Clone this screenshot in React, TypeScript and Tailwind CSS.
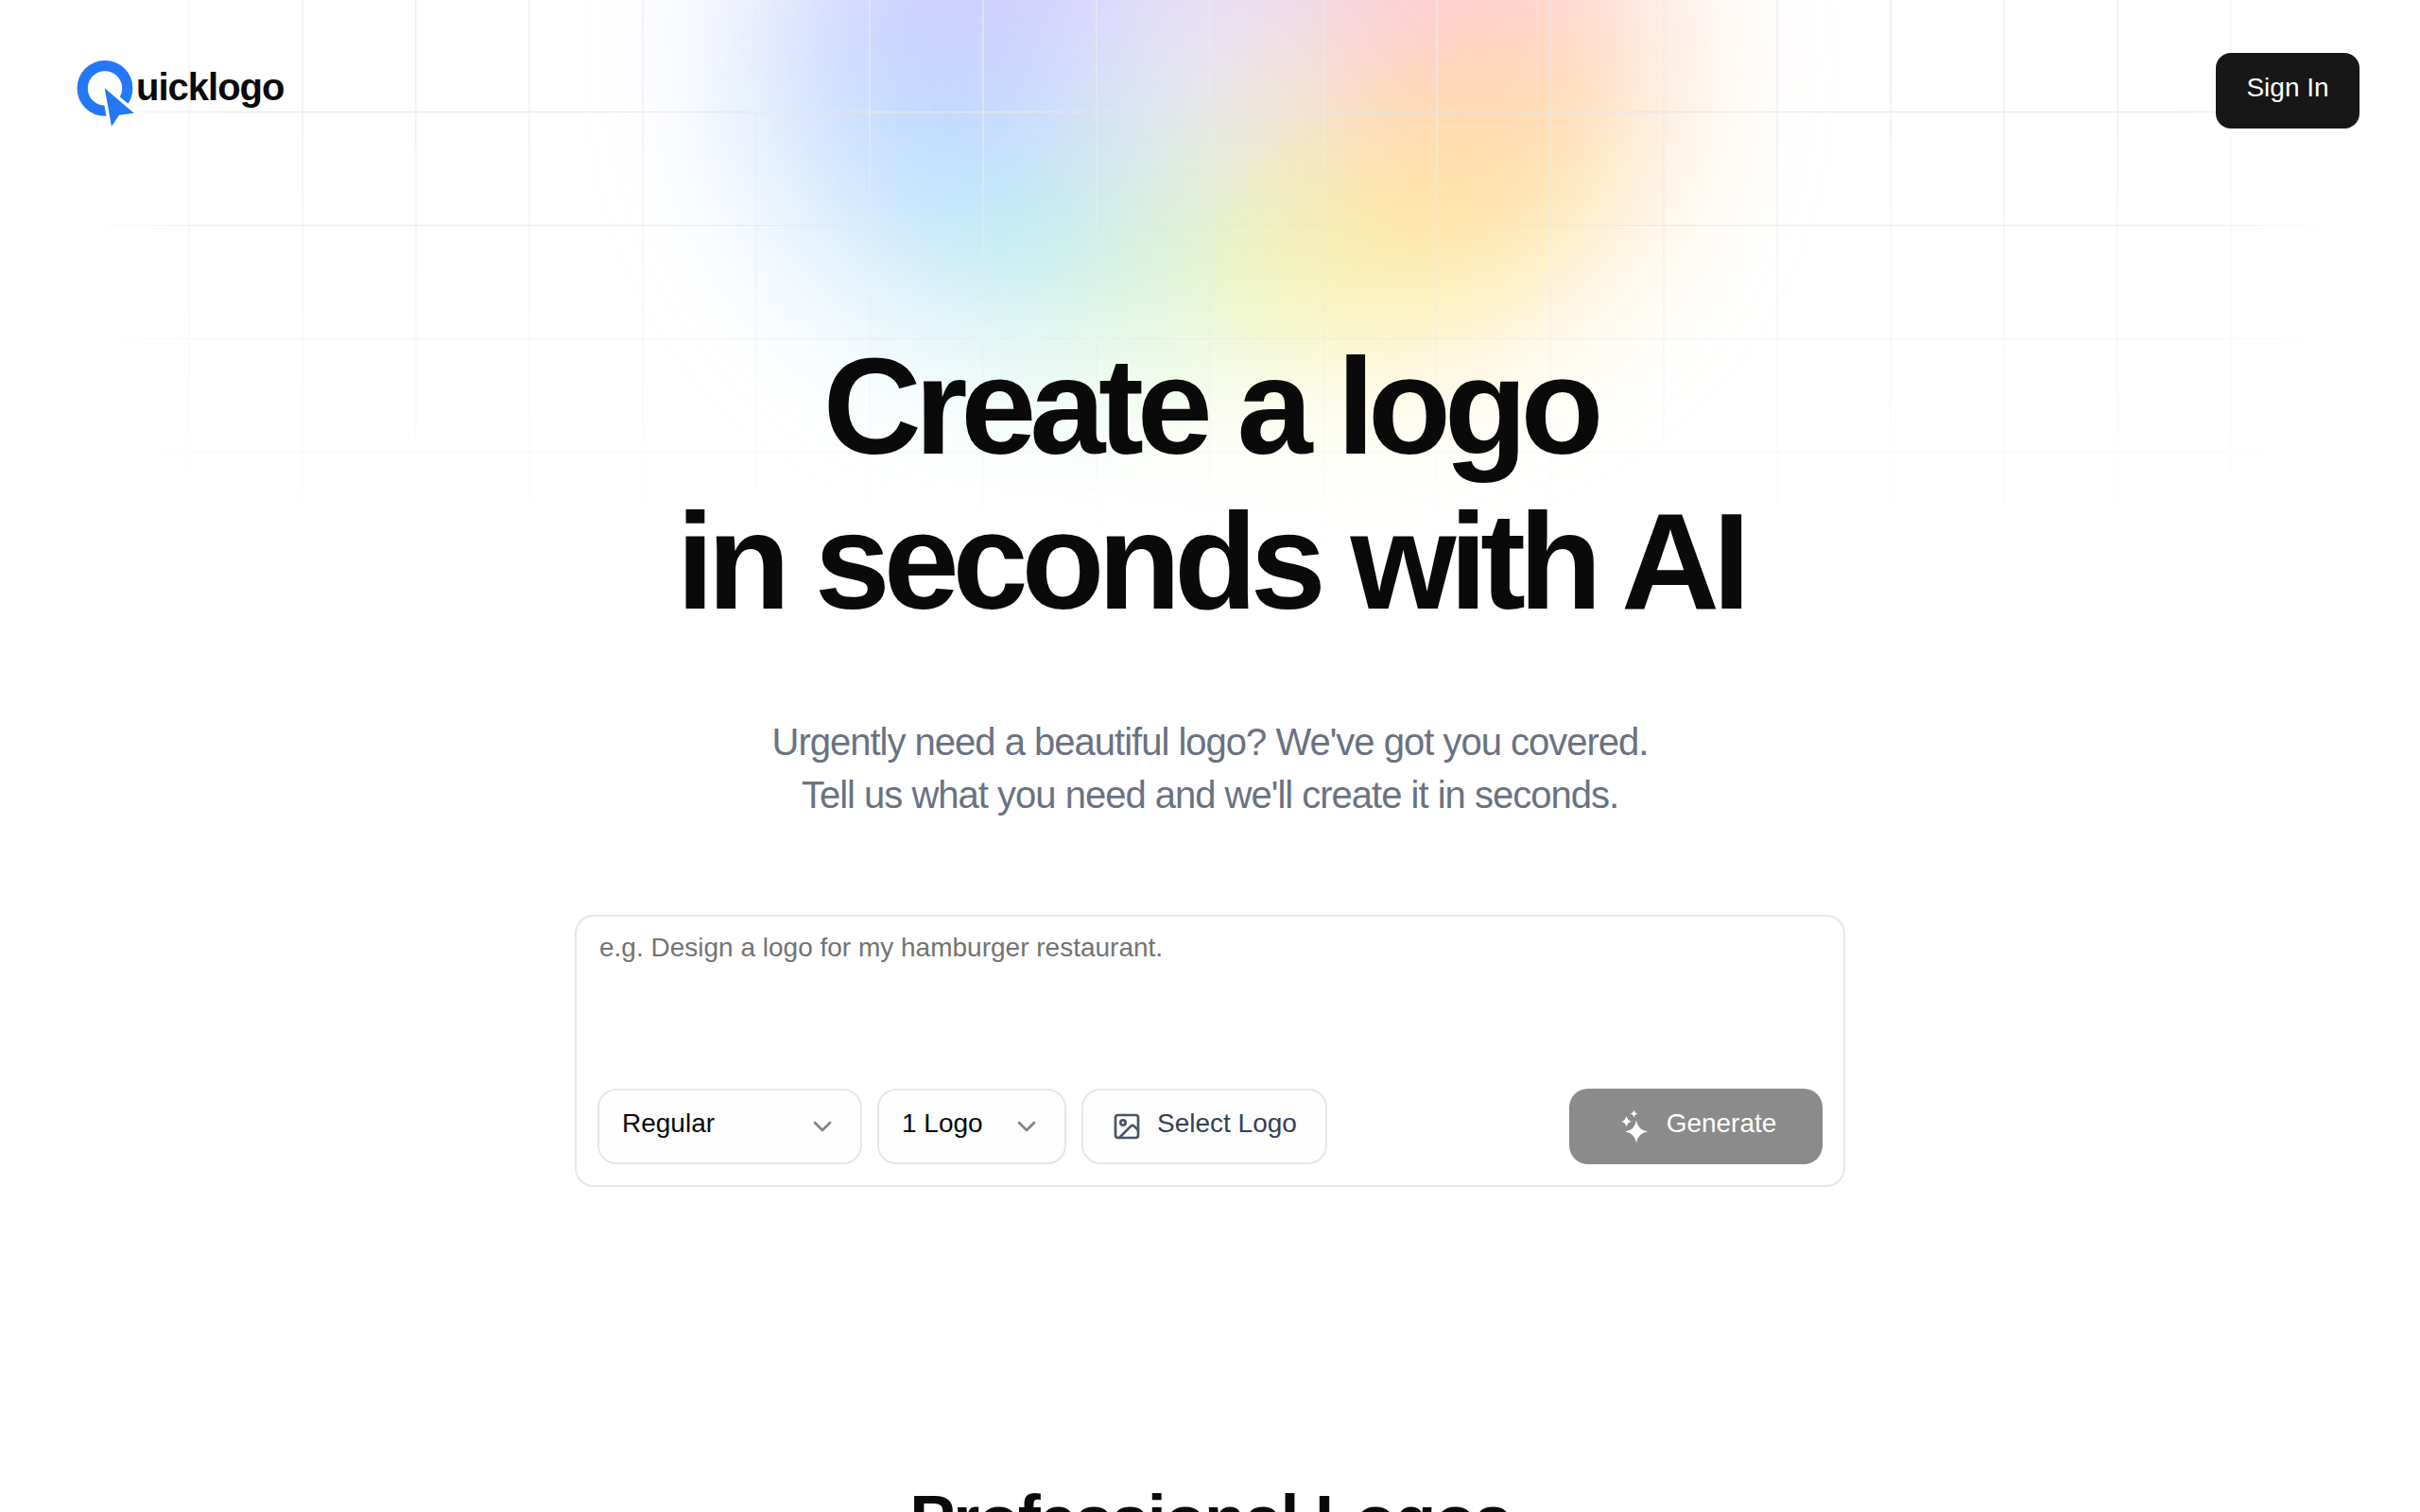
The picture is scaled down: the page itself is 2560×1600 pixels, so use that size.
import { ChevronDown, Image } from "lucide-react";

const FIELD =
  "h-20 appearance-none rounded-[20px] border-2 border-gray-200 bg-[#fdfdfd] pl-6 pr-16 pb-1.5 text-[28px] text-[#0a0a0a]";

function LogoMark() {
  return (
    <svg viewBox="0 0 62 70" className="h-[70px] w-[62px]" aria-hidden="true">
      <mask id="ring-cut" maskUnits="userSpaceOnUse" x="0" y="0" width="62" height="70">
        <rect width="62" height="70" fill="#fff" />
        <path d="M30.7 29.3 L61.7 55.7 L46 57.7 L38 69.7 Z" fill="#000" stroke="#000" strokeWidth="7" />
      </mask>
      <circle cx="31" cy="29.4" r="23.8" fill="none" stroke="#2478f5" strokeWidth="11.2" mask="url(#ring-cut)" />
      <path d="M30.7 29.3 L61.7 55.7 L46 57.7 L38 69.7 Z" fill="#2478f5" />
    </svg>
  );
}

function Sparkles() {
  return (
    <svg viewBox="0 0 28 36" className="h-9 w-7" fill="currentColor" aria-hidden="true">
      <path d="M16 11.5 Q17.8 22 28 23.5 Q17.8 25 16 35.5 Q14.2 25 4 23.5 Q14.2 22 16 11.5Z" />
      <path d="M5.5 7 Q6.7 12 11 12.8 Q6.7 13.6 5.5 18.6 Q4.3 13.6 0 12.8 Q4.3 12 5.5 7Z" />
      <path d="M13.5 0.5 Q14.3 4 17.5 4.5 Q14.3 5 13.5 8.5 Q12.7 5 9.5 4.5 Q12.7 4 13.5 0.5Z" />
    </svg>
  );
}

function Backdrop() {
  return (
    <div className="pointer-events-none absolute inset-0 overflow-hidden" aria-hidden="true">
      <div className="absolute -top-[240px] left-1/2 h-[610px] w-[940px] -translate-x-1/2 rounded-full bg-[radial-gradient(ellipse_200px_170px_at_50%_52%,#e2e0f6_20%,transparent),conic-gradient(at_50%_60%,#c3b5fb,#edaadd_36deg,#ff9bb5_56deg,#ffa59b_68deg,#ffb962_88deg,#ffc84d_106deg,#ffe04d_136deg,#d1f37c_175deg,#a5efb0_205deg,#8ee7de_228deg,#87cfff_250deg,#87b9ff_272deg,#9da5fb_294deg,#b8a0f7_308deg,#c3b5fb)] opacity-55 blur-[92px]" />
      <div className="absolute inset-x-0 top-0 h-[640px] bg-[linear-gradient(to_right,#ebebed90_2px,transparent_2px),linear-gradient(to_bottom,#e6e6e8_1px,transparent_1px)] bg-[size:120px_120px] bg-[position:calc(50%_+_59px)_-2px] [mask-image:linear-gradient(to_right,transparent_3%,#000_10%,#000_90%,transparent_97%),linear-gradient(to_bottom,#000_20%,transparent_95%)] [mask-composite:intersect]" />
    </div>
  );
}

export default function App() {
  return (
    <div className="relative min-h-screen overflow-hidden bg-white font-['Liberation_Sans',Arial,sans-serif] text-[#0a0a0a]">
      <Backdrop />
      <header className="relative flex items-start justify-between px-16 pt-14">
        <a href="#" className="flex items-start pt-2 pl-4">
          <LogoMark />
          <span className="pt-1 pl-0.5 text-[40px] leading-[48px] font-bold tracking-tight">uicklogo</span>
        </a>
        <button type="button" className="h-20 w-[152px] rounded-2xl bg-[#171717] pb-1.5 text-[28px] text-white">
          Sign In
        </button>
      </header>

      <main className="relative flex flex-col items-center">
        <h1 className="mt-[213px] text-center text-[144px] leading-[164px] font-bold tracking-tighter">
          Create a logo
          <br />
          in seconds with AI
        </h1>
        <p className="mt-20 text-center text-[40px] leading-[56px] tracking-tight text-gray-500">
          Urgently need a beautiful logo? We've got you covered.
          <br />
          Tell us what you need and we'll create it in seconds.
        </p>

        <form className="mt-[99px] w-full max-w-[1344px] rounded-[20px] border-2 border-gray-200 bg-white px-[22px] pt-[13px] pb-[22px]">
          <textarea
            aria-label="Logo description"
            placeholder="e.g. Design a logo for my hamburger restaurant."
            className="block h-[169px] w-full resize-none px-0.5 text-[28px] leading-10 outline-none placeholder:text-[#737373]"
          />
          <div className="flex items-center gap-4">
            <div className="relative">
              <select aria-label="Quality" className={`${FIELD} w-[280px]`}>
                <option>Regular</option>
                <option>High</option>
              </select>
              <ChevronDown className="pointer-events-none absolute top-6 right-[26px] size-8 text-[#858585]" />
            </div>
            <div className="relative">
              <select aria-label="Number of logos" className={`${FIELD} w-[200px]`}>
                <option>1 Logo</option>
                <option>2 Logos</option>
              </select>
              <ChevronDown className="pointer-events-none absolute top-6 right-[26px] size-8 text-[#858585]" />
            </div>
            <button
              type="button"
              className="flex h-20 items-center gap-4 rounded-[20px] border-2 border-gray-200 bg-[#fdfdfd] px-[30px] text-[28px] text-gray-700"
            >
              <Image className="size-8 text-gray-600" />
              <span className="pb-1.5">Select Logo</span>
            </button>
            <button
              type="submit"
              disabled
              className="ml-auto flex h-20 w-[268px] items-center justify-center gap-5 rounded-[20px] bg-[#8b8b8b] pl-1.5 text-[28px] text-white"
            >
              <Sparkles />
              <span className="pb-1.5">Generate</span>
            </button>
          </div>
        </form>

        <h2 className="mt-[312px] text-[72px] leading-[80px] font-bold tracking-tight">Professional Logos</h2>
      </main>
    </div>
  );
}
